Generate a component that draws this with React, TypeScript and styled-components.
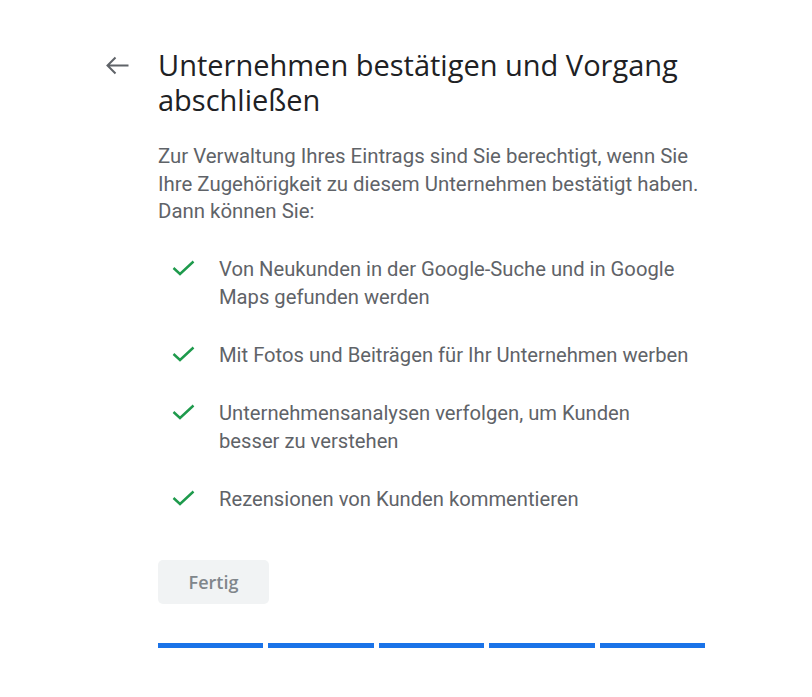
import React from "react";
import styled, { createGlobalStyle } from "styled-components";

const GlobalStyle = createGlobalStyle`
  html, body {
    margin: 0;
    padding: 0;
    background: #fff;
  }
  body {
    font-family: Roboto, "Liberation Sans", sans-serif;
  }
`;

const Page = styled.div`
  display: grid;
  grid-template-columns: 58px 547px;
  padding: 47px 0 0 100px;
`;

const BackButton = styled.button`
  display: flex;
  align-items: flex-start;
  width: 32px;
  height: 36px;
  padding: 0;
  margin-top: 9px;
  border: none;
  background: none;
  cursor: pointer;
`;

const Content = styled.div`
  display: flex;
  flex-direction: column;
`;

const Title = styled.h1`
  margin: 0;
  font-family: "Open Sans", sans-serif;
  font-size: 29px;
  line-height: 35px;
  font-weight: 400;
  color: #202124;
`;

const Intro = styled.p`
  margin: 26px 0 0;
  font-size: 20.4px;
  line-height: 27.5px;
  color: #5f6368;
`;

const List = styled.ul`
  list-style: none;
  margin: 29px 0 0;
  padding: 0 0 0 14px;
  display: flex;
  flex-direction: column;
  gap: 30px;
`;

const Item = styled.li`
  display: flex;
  gap: 24px;
`;

const CheckMark = styled.svg`
  flex: none;
  margin-top: 5px;
`;

const ItemText = styled.span`
  width: 472px;
  font-size: 20.2px;
  line-height: 28px;
  color: #5f6368;
`;

const DoneButton = styled.button`
  align-self: flex-start;
  width: 111px;
  height: 44px;
  margin-top: 47px;
  border: none;
  border-radius: 5px;
  background: #f1f3f4;
  font-family: "Open Sans", sans-serif;
  font-size: 18px;
  font-weight: 600;
  color: #80868b;
`;

const Progress = styled.div`
  display: flex;
  gap: 5px;
  margin-top: 39px;
`;

const Segment = styled.div`
  flex: 1;
  height: 5px;
  background: #1a73e8;
`;

const items = [
  "Von Neukunden in der Google-Suche und in Google Maps gefunden werden",
  "Mit Fotos und Beiträgen für Ihr Unternehmen werben",
  "Unternehmensanalysen verfolgen, um Kunden besser zu verstehen",
  "Rezensionen von Kunden kommentieren",
];

const App = () => {
  return (
    <>
      <GlobalStyle />
      <Page>
        <BackButton aria-label="Zurück">
          <svg width="32" height="20" viewBox="0 0 32 20">
            <path
              d="M7.5 9.5H28.5M15.5 1.5L7.5 9.5L15.5 17.5"
              fill="none"
              stroke="#5f6368"
              strokeWidth="2"
            />
          </svg>
        </BackButton>
        <Content>
          <Title>Unternehmen bestätigen und Vorgang abschließen</Title>
          <Intro>
            Zur Verwaltung Ihres Eintrags sind Sie berechtigt, wenn Sie Ihre
            Zugehörigkeit zu diesem Unternehmen bestätigt haben. Dann können
            Sie:
          </Intro>
          <List>
            {items.map((text) => (
              <Item key={text}>
                <CheckMark width="23" height="16" viewBox="0 0 23 16">
                  <path
                    d="M1.5 8L8 14L21.5 1.5"
                    fill="none"
                    stroke="#1e9a4c"
                    strokeWidth="2.4"
                  />
                </CheckMark>
                <ItemText>{text}</ItemText>
              </Item>
            ))}
          </List>
          <DoneButton disabled>Fertig</DoneButton>
          <Progress>
            {[0, 1, 2, 3, 4].map((i) => (
              <Segment key={i} />
            ))}
          </Progress>
        </Content>
      </Page>
    </>
  );
};

export default App;
